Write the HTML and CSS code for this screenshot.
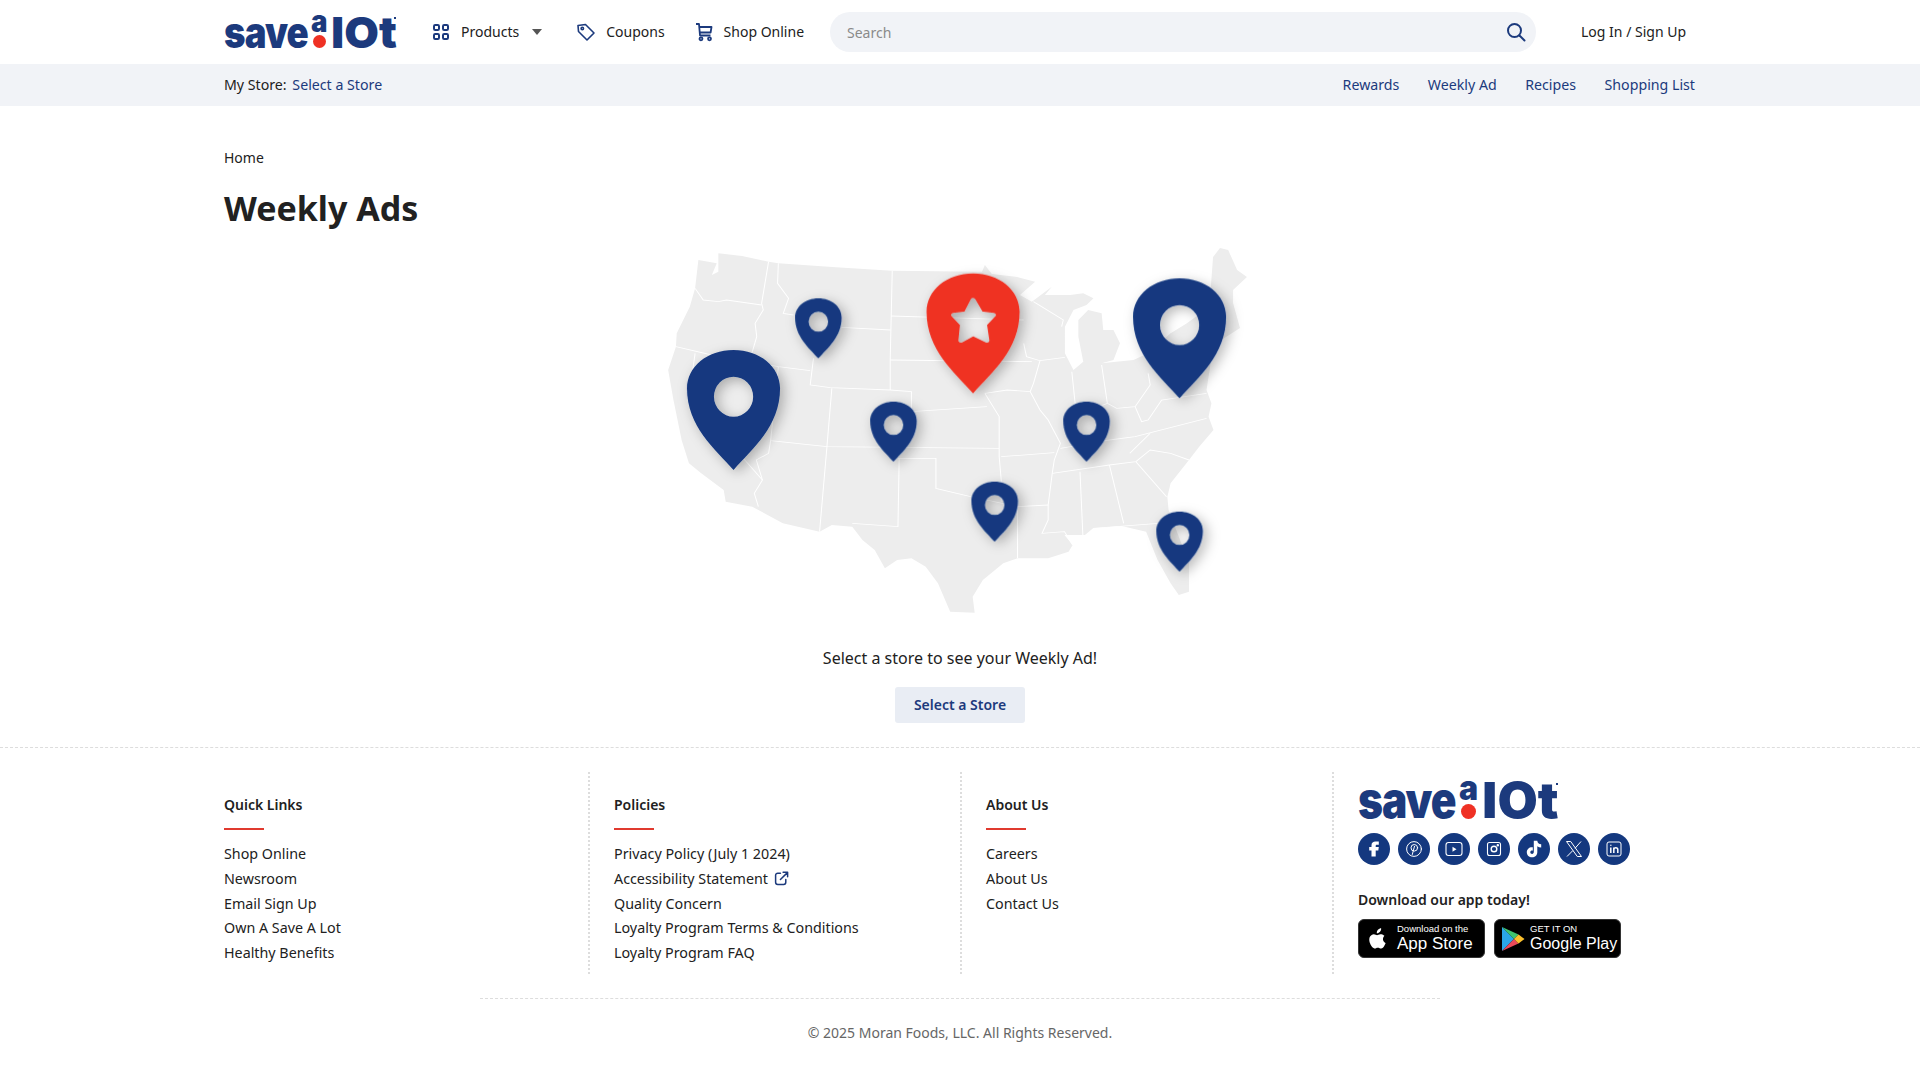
FILE: index.html
```html
<!DOCTYPE html>
<html lang="en">

<head>
    <meta charset="UTF-8">
    <meta name="viewport" content="width=device-width, initial-scale=1.0">
    <title>Weekly Ads</title>
    <link rel="stylesheet" href="styles.css">
</head>

<body>
    <header class="top-bar">
        <div class="wrap top-row">
            <a class="logo" href="#"><span class="logo-save">save</span><span class="logo-mid"><i>a</i><b></b></span><span class="logo-lot">lOt</span><em></em></a>
            <nav class="main-nav">
                <a class="nav-item nav-products" href="#">
                    <svg width="18" height="18" viewBox="0 0 18 18" fill="none" stroke="#1c3a7d" stroke-width="2"><rect x="2" y="2" width="5" height="5" rx="1.2"/><rect x="11" y="2" width="5" height="5" rx="1.2"/><rect x="2" y="11" width="5" height="5" rx="1.2"/><rect x="11" y="11" width="5" height="5" rx="1.2"/></svg>
                    Products
                    <span class="caret"></span>
                </a>
                <a class="nav-item nav-coupons" href="#">
                    <svg width="20" height="20" viewBox="0 0 20 20" fill="none" stroke="#1c3a7d" stroke-width="1.6" stroke-linejoin="round"><path d="M2 3.5 9.5 2.5 18 11 11 18 2.5 9.5Z"/><circle cx="6.3" cy="6.5" r="1.2"/></svg>
                    Coupons
                </a>
                <a class="nav-item nav-shop" href="#">
                    <svg width="18" height="20" viewBox="0 0 18 20" fill="none" stroke="#1c3a7d" stroke-width="1.8" stroke-linejoin="round"><path d="M1 2h3l1 11.5h10.5"/><path d="M4.2 5H16.5L15.6 10.5H4.8"/><circle cx="6" cy="16.8" r="1.5"/><circle cx="14.5" cy="16.8" r="1.5"/></svg>
                    Shop Online
                </a>
            </nav>
            <div class="search-box">
                <input type="text" placeholder="Search">
                <svg width="20" height="20" viewBox="0 0 20 20" fill="none" stroke="#1c3a7d" stroke-width="2" stroke-linecap="round"><circle cx="8.5" cy="8.5" r="6.5"/><path d="M13.5 13.5 18.5 18.5"/></svg>
            </div>
            <a class="login" href="#">Log In / Sign Up</a>
        </div>
    </header>

    <div class="store-bar">
        <div class="wrap store-row">
            <div class="my-store">My Store: <a href="#">Select a Store</a></div>
            <nav class="store-links">
                <a href="#">Rewards</a>
                <a href="#">Weekly Ad</a>
                <a href="#">Recipes</a>
                <a href="#">Shopping List</a>
            </nav>
        </div>
    </div>

    <main class="wrap page">
        <div class="crumb">Home</div>
        <h1>Weekly Ads</h1>

        <svg class="map" width="640" height="400" viewBox="0 0 1568 1200" preserveAspectRatio="none">
            <defs>
                <filter id="pinShadow" x="-40%" y="-30%" width="190%" height="170%">
                    <feDropShadow dx="10" dy="10" stdDeviation="16 18" flood-color="#000" flood-opacity="0.27"/>
                </filter>
                <path id="pinBig" fill-rule="evenodd" d="M0 0C-45 -62 -114 -130 -114 -245C-114 -310 -64 -360 0 -360C64 -360 114 -310 114 -245C114 -130 45 -62 0 0ZM0 -280A48 60 0 1 0 0.1 -160A48 60 0 1 0 0 -280Z"/>
                <mask id="starHole" maskUnits="userSpaceOnUse" x="650" y="100" width="340" height="420">
                    <rect x="650" y="100" width="340" height="420" fill="#fff"/>
                    <path d="M816 210 835 250 866 255 844 283 850 332 816 312 786 332 790 283 768 255 799 250Z" fill="#000" stroke="#000" stroke-width="12" stroke-linejoin="round"/>
                </mask>
            </defs>
            <path class="land" d="M143 90 188 100 176 135 192 125 192 70 250 78 315 95 339 100 480 112 617 122 838 125 845 105 862 132 920 140 968 155 931 195 960 215 1009 170 992 195 1054 195 1086 190 1111 205 1094 225 1062 240 1041 290 1041 370 1062 420 1086 395 1074 320 1074 270 1098 240 1131 250 1135 300 1160 300 1176 340 1160 390 1131 400 1209 390 1245 370 1300 310 1340 280 1395 230 1404 81 1421 54 1441 60 1463 120 1487 141 1453 180 1453 219 1470 294 1405 345 1388 480 1400 520 1393 560 1405 600 1370 650 1345 690 1300 760 1292 800 1295 840 1345 1000 1345 1085 1320 1095 1300 1060 1268 990 1240 905 1180 888 1110 895 1090 915 1040 915 1060 945 1050 965 1000 985 925 985 890 1000 840 1050 815 1100 820 1148 760 1145 730 1060 700 1010 665 985 630 990 600 1015 575 960 545 930 520 890 470 885 440 905 350 880 275 830 210 815 205 780 150 730 120 700 102 630 82 510 69 420 88 350 90 310 122 230 135 175Z"/>
            <g class="lines">
                <path d="M315 95 298 220 302 240 282 280 286 320 274 370"/>
                <path d="M135 175 155 210 192 215 212 210 298 225"/>
                <path d="M88 350 176 375 339 410 417 422"/>
                <path d="M339 100 337 160 364 205 351 250 376 255"/>
                <path d="M425 385 417 465 466 473 613 480 665 485 665 545 850 530"/>
                <path d="M494 292 614 300"/>
                <path d="M618 122 613 390 613 480"/>
                <path d="M615 258 940 270"/>
                <path d="M613 390 960 395"/>
                <path d="M470 475 458 650 880 655"/>
                <path d="M339 410 320 632 458 650"/>
                <path d="M135 370 120 500 300 750 280 790 290 830"/>
                <path d="M320 632 315 670 285 690 300 750"/>
                <path d="M458 650 440 905"/>
                <path d="M635 685 632 890 520 880"/>
                <path d="M632 685 725 685 725 775 810 800 925 830 1000 825"/>
                <path d="M845 490 880 560 880 680 885 750 885 815"/>
                <path d="M885 680 1015 668"/>
                <path d="M925 830 925 985"/>
                <path d="M845 490 900 480 956 485 980 540 1000 570 1030 640 1015 690 1010 730 1000 825 1000 870 985 910 1040 905 1060 945"/>
                <path d="M940 340 947 380 980 392 964 460 956 485"/>
                <path d="M980 392 1041 382"/>
                <path d="M1058 425 1066 520 1060 560 1145 520"/>
                <path d="M1131 405 1145 520 1168 535 1213 530 1250 465 1245 430"/>
                <path d="M1213 530 1229 575 1245 570 1278 510 1388 490"/>
                <path d="M1030 655 1150 630 1213 620 1388 565"/>
                <path d="M1010 730 1150 705 1215 695 1250 660 1300 670 1345 690"/>
                <path d="M1078 725 1085 915"/>
                <path d="M1150 705 1185 880"/>
                <path d="M1110 895 1270 880"/>
                <path d="M1215 695 1290 800"/>
                <path d="M964 215 1037 270 1033 290"/>
                <path d="M1200 670 1250 610"/>
            </g>
            <g filter="url(#pinShadow)" fill="#14387f">
                <use href="#pinBig" transform="translate(229 720)"/>
                <use href="#pinBig" transform="translate(1322 505)"/>
                <use href="#pinBig" transform="translate(437 385) scale(.5)"/>
                <use href="#pinBig" transform="translate(621 695) scale(.5)"/>
                <use href="#pinBig" transform="translate(1094 695) scale(.5)"/>
                <use href="#pinBig" transform="translate(869 935) scale(.5)"/>
                <use href="#pinBig" transform="translate(1322 1025) scale(.5)"/>
            </g>
            <g filter="url(#pinShadow)">
                <path fill="#ef3124" mask="url(#starHole)" d="M816 490C771 428 702 360 702 245C702 180 752 130 816 130C880 130 930 180 930 245C930 360 861 428 816 490Z"/>
            </g>
        </svg>

        <p class="prompt">Select a store to see your Weekly Ad!</p>
        <a class="store-btn" href="#">Select a Store</a>
    </main>

    <footer class="footer">
        <div class="wrap footer-cols">
            <section class="foot-col col-quick">
                <h2>Quick Links</h2>
                <a class="foot-link" href="#">Shop Online</a>
                <a class="foot-link" href="#">Newsroom</a>
                <a class="foot-link" href="#">Email Sign Up</a>
                <a class="foot-link" href="#">Own A Save A Lot</a>
                <a class="foot-link" href="#">Healthy Benefits</a>
            </section>
            <section class="foot-col col-policies">
                <h2>Policies</h2>
                <a class="foot-link" href="#">Privacy Policy (July 1 2024)</a>
                <a class="foot-link" href="#">Accessibility Statement
                    <svg class="ext" width="15" height="15" viewBox="0 0 14 14" fill="none" stroke="#1c3a7d" stroke-width="1.4" stroke-linecap="round" stroke-linejoin="round"><path d="M6 2H3.5A2 2 0 0 0 1.5 4v6.5a2 2 0 0 0 2 2H9a2 2 0 0 0 2-2V8"/><path d="M6 8 12.5 1.5M8.5 1.2h4.2v4.2"/></svg>
                </a>
                <a class="foot-link" href="#">Quality Concern</a>
                <a class="foot-link" href="#">Loyalty Program Terms &amp; Conditions</a>
                <a class="foot-link" href="#">Loyalty Program FAQ</a>
            </section>
            <section class="foot-col col-about">
                <h2>About Us</h2>
                <a class="foot-link" href="#">Careers</a>
                <a class="foot-link" href="#">About Us</a>
                <a class="foot-link" href="#">Contact Us</a>
            </section>
            <section class="foot-col col-brand">
                <a class="logo logo-footer" href="#"><span class="logo-save">save</span><span class="logo-mid"><i>a</i><b></b></span><span class="logo-lot">lOt</span><em></em></a>
                <div class="socials">
                    <a href="#"><svg viewBox="0 0 20 20"><path fill="#fff" d="M7.500 17.500V11.500H5.200V8H7.500V6.300C7.500 3.700 9.200 2.500 11.500 2.500H14.800V5.800H13C12 5.800 11.700 6.200 11.700 7V8H14.800L14.300 11.500H11.700V17.500Z"/></svg></a>
                    <a href="#"><svg viewBox="0 0 20 20" fill="none" stroke="#fff" stroke-width="1" stroke-linecap="round"><circle cx="10" cy="10" r="7.400"/><circle cx="10.300" cy="8.800" r="3.300"/><path d="M10.500 7.300 8.300 15.500"/></svg></a>
                    <a href="#"><svg viewBox="0 0 20 20" fill="none" stroke="#fff" stroke-width="1.100"><rect x="2" y="3.500" width="16" height="13" rx="2.500"/><path d="M8.500 7.700v5l4-2.500Z" fill="#fff" stroke="none"/></svg></a>
                    <a href="#"><svg viewBox="0 0 20 20" fill="none" stroke="#fff" stroke-width="1.100"><rect x="3.500" y="3.500" width="13" height="13" rx="2"/><circle cx="10" cy="10" r="2.800" stroke-width="1.400"/><circle cx="13.800" cy="6.200" r=".7" fill="#fff"/></svg></a>
                    <a href="#"><svg viewBox="0 0 20 20"><path fill="#fff" d="M9.800 1.800h3.500c.2 2.100 1.500 3.300 3.900 3.500v3.200c-1.500 0-2.800-.4-3.900-1.200v6c0 3.100-2.400 5-5.200 5-3 0-5.300-2.200-5.300-5.100 0-3.200 2.800-5.400 6-4.900v3.400c-1.300-.4-2.500.4-2.500 1.500 0 1 .8 1.700 1.800 1.700s1.700-.8 1.700-1.900Z"/></svg></a>
                    <a href="#"><svg viewBox="0 0 20 20" fill="none" stroke="#fff" stroke-width="1"><path d="M2.500 2.500h4.200l10.800 15h-4.200Z"/><path d="M17 2.500 11 9.300M8.800 11.600 3 17.500"/></svg></a>
                    <a href="#"><svg viewBox="0 0 20 20" fill="none" stroke="#fff" stroke-width="1"><rect x="3" y="3" width="14" height="14" rx="2"/><path d="M6.800 8.500v5.500M6.800 5.800v1M9.800 14V8.500M9.800 10.800c0-2.800 4-2.800 4 0V14" stroke-width="1.500"/></svg></a>
                </div>
                <div class="app-title">Download our app today!</div>
                <div class="badges">
                    <a class="badge" href="#">
                        <svg width="19" height="23" viewBox="0 0 22 26"><path fill="#fff" d="M15.200 1c.2 1.600-.4 3-1.300 4.100-.9 1.100-2.300 1.900-3.700 1.800-.2-1.500.5-3 1.300-4C12.400 1.800 14 1 15.200 1ZM19.900 9.200c-.2.100-2.600 1.500-2.600 4.500 0 3.400 3 4.600 3.100 4.600 0 .1-.5 1.700-1.600 3.300-1 1.400-2 2.900-3.600 2.900-1.500 0-2-.9-3.800-.9-1.800 0-2.400.9-3.800.9-1.600.1-2.800-1.500-3.800-3C1.900 18.400.500 14.100 2.400 10.800c1-1.600 2.600-2.600 4.300-2.700 1.500 0 2.900 1 3.800 1 .9 0 2.500-1.200 4.300-1 .7 0 2.800.3 4.100 2.100Z"/></svg>
                        <span class="badge-text"><small>Download on the</small><strong>App Store</strong></span>
                    </a>
                    <a class="badge badge-play" href="#">
                        <svg width="24" height="26" viewBox="0 0 24 26"><path fill="#2aa6e8" d="M1 1v24l12-12Z"/><path fill="#3fc46f" d="M1 1 13 13l4.500-4.500Z"/><path fill="#ea4a5a" d="M1 25 13 13l4.500 4.500Z"/><path fill="#fbc02d" d="M17.500 8.500 13 13l4.500 4.500L23.500 13Z"/></svg>
                        <span class="badge-text"><small>GET IT ON</small><strong>Google Play</strong></span>
                    </a>
                </div>
            </section>
        </div>
        <div class="copyright">© 2025 Moran Foods, LLC. All Rights Reserved.</div>
    </footer>
</body>

</html>
```

FILE: styles.css
```css
* {
    box-sizing: border-box;
}

body {
    margin: 0;
    font-family: 'Noto Sans', sans-serif;
    font-size: 14px;
    color: #212121;
    background-color: #fff;
}

a {
    color: inherit;
    text-decoration: none;
}

.wrap {
    width: 1472px;
    margin: 0 auto;
}

/* header */
.top-bar {
    height: 64px;
}

.top-row {
    display: flex;
    align-items: center;
    height: 64px;
}

/* logo sizes hang off --u so the footer copy just scales up */
.logo {
    --u: 1px;
    display: flex;
    flex: none;
    position: relative;
    width: calc(var(--u) * 172);
    height: calc(var(--u) * 32);
    font-family: 'Inter', sans-serif;
    font-size: calc(var(--u) * 43);
    line-height: calc(var(--u) * 32);
    font-weight: 900;
    color: #1c3a7d;
}

.logo-footer {
    --u: 1.163px;
}

.logo-save {
    flex: none;
    width: calc(var(--u) * 85);
    letter-spacing: calc(var(--u) * -1);
    transform: scaleX(.85);
    transform-origin: left;
}

.logo-mid {
    position: relative;
    flex: none;
    width: calc(var(--u) * 22);
}

.logo-mid i {
    position: absolute;
    left: calc(var(--u) * 2);
    top: calc(var(--u) * -1);
    font-style: normal;
    font-size: calc(var(--u) * 30);
    line-height: calc(var(--u) * 12);
    transform: scaleX(.92);
    transform-origin: left;
}

.logo-mid b {
    position: absolute;
    left: calc(var(--u) * 3.500);
    bottom: 0;
    width: calc(var(--u) * 13);
    height: calc(var(--u) * 13);
    border-radius: 50%;
    background-color: #ef3124;
}

.logo-lot {
    flex: none;
    width: calc(var(--u) * 63);
    transform: scaleX(1.040);
    transform-origin: left;
}

.logo em {
    position: absolute;
    right: 0;
    top: calc(var(--u) * 1);
    width: calc(var(--u) * 2);
    height: calc(var(--u) * 2);
    background-color: #1c3a7d;
}

.main-nav {
    display: flex;
    align-items: center;
    margin-left: 36px;
    margin-bottom: 2px;
}

.nav-item {
    display: flex;
    align-items: center;
    gap: 11px;
}

.nav-item svg {
    margin-top: 2px;
}

.caret {
    width: 0;
    height: 0;
    margin-left: 2px;
    margin-top: 2px;
    border-left: 5px solid transparent;
    border-right: 5px solid transparent;
    border-top: 6px solid #555;
}

.nav-coupons {
    margin-left: 34px;
    gap: 10px;
}

.nav-shop {
    margin-left: 30px;
}

.search-box {
    display: flex;
    align-items: center;
    width: 706px;
    height: 40px;
    margin-left: 26px;
    padding: 0 10px 0 17px;
    border-radius: 20px;
    background-color: #f1f3f7;
}

.search-box input {
    flex: 1;
    border: none;
    outline: none;
    padding: 0;
    background: transparent;
    font-family: inherit;
    font-size: 14px;
    color: #212121;
}

.search-box input::placeholder {
    color: #8a8a8a;
}

.login {
    margin-left: 45px;
    margin-bottom: 2px;
}

.store-bar {
    height: 42px;
    background-color: #f1f3f7;
}

.store-row {
    display: flex;
    align-items: center;
    justify-content: space-between;
    height: 42px;
    padding: 0 1px 2px 0;
    font-size: 14.200px;
}

.my-store a {
    margin-left: 2px;
    color: #1c3a7d;
}

.store-links {
    display: flex;
    gap: 28.500px;
    color: #1c3a7d;
}

/* page */
.page {
    display: flex;
    flex-direction: column;
    align-items: center;
    height: 641px;
    padding-top: 42px;
}

.crumb {
    align-self: flex-start;
    line-height: 20px;
}

h1 {
    align-self: flex-start;
    margin: 15px 0 0;
    font-size: 34px;
    line-height: 50px;
    font-weight: 700;
}

.map {
    display: block;
    flex: none;
    margin-top: -3px;
}

.land {
    fill: #ededed;
}

.lines path {
    fill: none;
    stroke: #fff;
    stroke-width: 2.5;
}

.prompt {
    margin: 16px 0 0;
    font-size: 16px;
    line-height: 24px;
}

.store-btn {
    display: block;
    margin-top: 17px;
    padding: 0 19px;
    height: 36px;
    line-height: 36px;
    border-radius: 3px;
    background-color: #e9edf4;
    color: #1c3a7d;
    font-weight: 600;
}

/* footer */
.footer {
    border-top: 1px dashed #ddd;
    padding-top: 24px;
}

.footer-cols {
    display: flex;
    height: 202px;
}

.foot-col {
    padding-top: 23px;
    border-right: 2px dotted #ddd;
    font-size: 14.300px;
}

.foot-col h2 {
    position: relative;
    margin: 0 0 27px;
    font-size: 14px;
    line-height: 20px;
    font-weight: 600;
}

.foot-col h2::after {
    content: "";
    position: absolute;
    left: 0;
    bottom: -15px;
    width: 40px;
    height: 2px;
    background-color: #e03a2f;
}

.foot-link {
    display: block;
    line-height: 24.800px;
}

.col-quick {
    width: 366px;
}

.col-policies {
    width: 372px;
    padding-left: 24px;
}

.col-about {
    width: 372px;
    padding-left: 24px;
}

.col-brand {
    flex: 1;
    padding: 10px 0 0 24px;
    border-right: none;
}

.ext {
    margin-left: 2px;
    vertical-align: -2px;
}

.socials {
    display: flex;
    gap: 8px;
    margin-top: 14px;
}

.socials a {
    display: flex;
    align-items: center;
    justify-content: center;
    width: 32px;
    height: 32px;
    border-radius: 50%;
    background-color: #14387f;
}

.socials svg {
    width: 20px;
    height: 20px;
}

.app-title {
    margin-top: 25px;
    font-size: 14px;
    line-height: 20px;
    font-weight: 600;
}

.badges {
    display: flex;
    gap: 9px;
    margin-top: 9px;
}

.badge {
    display: flex;
    align-items: center;
    gap: 10px;
    width: 127px;
    height: 39px;
    padding-left: 9px;
    border: 1px solid #333;
    border-radius: 6px;
    background-color: #000;
    color: #fff;
    font-family: 'Liberation Sans', sans-serif;
    white-space: nowrap;
}

.badge-play {
    gap: 5px;
    padding-left: 6px;
}

.badge-text {
    display: flex;
    flex-direction: column;
}

.badge-text small {
    font-size: 9.500px;
    line-height: 10px;
}

.badge-text strong {
    font-size: 17px;
    line-height: 19px;
    font-weight: 400;
}

.badge-play strong {
    font-size: 16px;
}

.copyright {
    width: 960px;
    height: 60px;
    margin: 24px auto 0;
    padding-top: 24px;
    border-top: 1px dashed #ddd;
    text-align: center;
    line-height: 20px;
    color: #666;
}
```
